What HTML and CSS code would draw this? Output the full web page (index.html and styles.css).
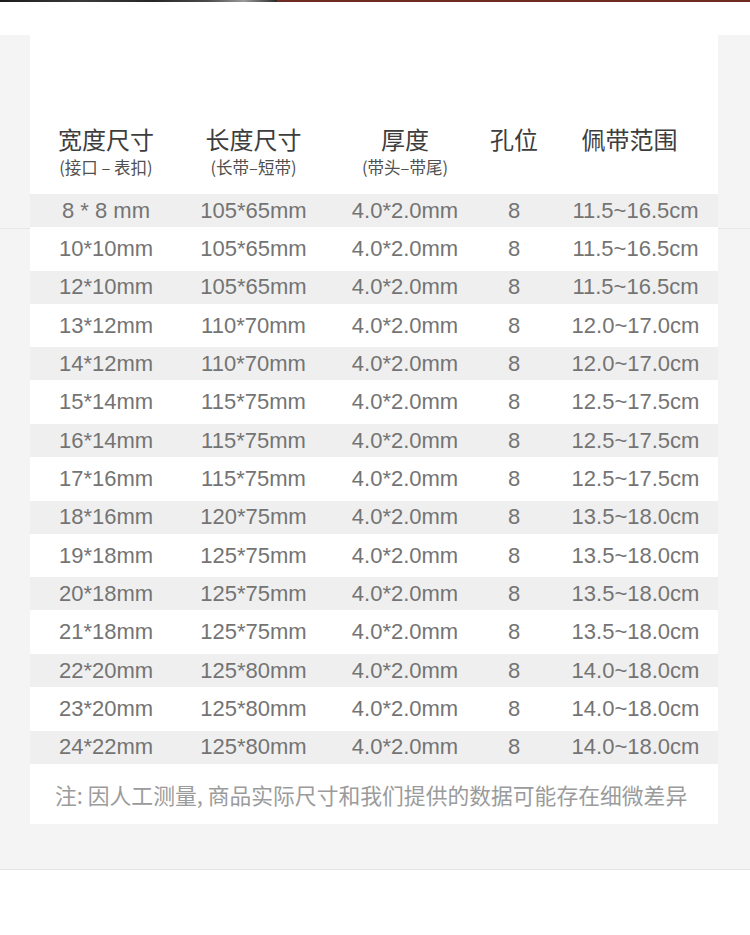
FILE: index.html
```html
<!DOCTYPE html>
<html lang="zh">
<head>
<meta charset="utf-8">
<title>尺寸表</title>
<link rel="stylesheet" href="styles.css">
</head>
<body>
<div class="topbar"><div class="topbar-left"></div><div class="topbar-right"></div></div>
<div class="spacer"></div>
<div class="panel">
  <div class="card">
    <div class="grid head">
      <div class="hcell"><div class="h-main">宽度尺寸</div><div class="h-sub">(接口 – 表扣)</div></div>
      <div class="hcell"><div class="h-main">长度尺寸</div><div class="h-sub">(长带–短带)</div></div>
      <div class="hcell"><div class="h-main">厚度</div><div class="h-sub">(带头–带尾)</div></div>
      <div class="hcell"><div class="h-main">孔位</div></div>
      <div class="hcell h5"><div class="h-main">佩带范围</div></div>
    </div>
    <div class="rows">
      <div class="grid row odd"><span>8 * 8 mm</span><span>105*65mm</span><span>4.0*2.0mm</span><span>8</span><span class="c5">11.5~16.5cm</span></div>
      <div class="grid row"><span>10*10mm</span><span>105*65mm</span><span>4.0*2.0mm</span><span>8</span><span class="c5">11.5~16.5cm</span></div>
      <div class="grid row odd"><span>12*10mm</span><span>105*65mm</span><span>4.0*2.0mm</span><span>8</span><span class="c5">11.5~16.5cm</span></div>
      <div class="grid row"><span>13*12mm</span><span>110*70mm</span><span>4.0*2.0mm</span><span>8</span><span class="c5">12.0~17.0cm</span></div>
      <div class="grid row odd"><span>14*12mm</span><span>110*70mm</span><span>4.0*2.0mm</span><span>8</span><span class="c5">12.0~17.0cm</span></div>
      <div class="grid row"><span>15*14mm</span><span>115*75mm</span><span>4.0*2.0mm</span><span>8</span><span class="c5">12.5~17.5cm</span></div>
      <div class="grid row odd"><span>16*14mm</span><span>115*75mm</span><span>4.0*2.0mm</span><span>8</span><span class="c5">12.5~17.5cm</span></div>
      <div class="grid row"><span>17*16mm</span><span>115*75mm</span><span>4.0*2.0mm</span><span>8</span><span class="c5">12.5~17.5cm</span></div>
      <div class="grid row odd"><span>18*16mm</span><span>120*75mm</span><span>4.0*2.0mm</span><span>8</span><span class="c5">13.5~18.0cm</span></div>
      <div class="grid row"><span>19*18mm</span><span>125*75mm</span><span>4.0*2.0mm</span><span>8</span><span class="c5">13.5~18.0cm</span></div>
      <div class="grid row odd"><span>20*18mm</span><span>125*75mm</span><span>4.0*2.0mm</span><span>8</span><span class="c5">13.5~18.0cm</span></div>
      <div class="grid row"><span>21*18mm</span><span>125*75mm</span><span>4.0*2.0mm</span><span>8</span><span class="c5">13.5~18.0cm</span></div>
      <div class="grid row odd"><span>22*20mm</span><span>125*80mm</span><span>4.0*2.0mm</span><span>8</span><span class="c5">14.0~18.0cm</span></div>
      <div class="grid row"><span>23*20mm</span><span>125*80mm</span><span>4.0*2.0mm</span><span>8</span><span class="c5">14.0~18.0cm</span></div>
      <div class="grid row odd"><span>24*22mm</span><span>125*80mm</span><span>4.0*2.0mm</span><span>8</span><span class="c5">14.0~18.0cm</span></div>
    </div>
    <div class="note">注: 因人工测量, 商品实际尺寸和我们提供的数据可能存在细微差异</div>
  </div>
</div>
<div class="bottom"></div>
</body>
</html>
```

FILE: styles.css
```css
html, body {
  margin: 0;
  padding: 0;
  background: #ffffff;
}
body {
  width: 750px;
  font-family: "Liberation Sans", "Noto Sans CJK SC", sans-serif;
}
.topbar {
  display: flex;
  height: 2px;
}
.topbar-left {
  width: 277px;
  background: linear-gradient(90deg, #1c1c1c 0%, #3a3a3a 30%, #262626 55%, #4a4a4a 75%, #9a9a9a 88%, #2a2a2a 100%);
}
.topbar-right {
  flex: 1;
  background: #6f2b22;
}
.spacer {
  height: 33px;
}
.panel {
  background-color: #f4f4f4;
  background-image: linear-gradient(to bottom, transparent 193px, #e7e7e7 193px, #e7e7e7 194px, transparent 194px);
  padding: 0 32px 45px 30px;
  border-bottom: 1px solid #e3e3e3;
}
.card {
  background: #ffffff;
  height: 789px;
  padding-top: 89px;
  box-sizing: border-box;
}
.grid {
  display: grid;
  grid-template-columns: 152px 143px 160px 58px 175px;
  align-items: center;
  justify-items: center;
}
.head {
  align-items: start;
  height: 70px;
}
.hcell {
  display: flex;
  flex-direction: column;
  align-items: center;
  font-family: "Noto Sans CJK SC", sans-serif;
}
.h-main {
  font-size: 24px;
  line-height: 30px;
  color: #3d3d3d;
}
.h-sub {
  font-size: 16.5px;
  line-height: 20px;
  margin-top: 3px;
  color: #505050;
}
.h5 {
  padding-right: 2px;
}
.c5 {
  padding-left: 10px;
}
.row {
  height: 43.7px;
  font-size: 22px;
  color: #747474;
}
.row.odd {
  height: 33px;
  background: #efefef;
}
.note {
  font-family: "Noto Sans CJK SC", sans-serif;
  font-size: 21.8px;
  line-height: 30px;
  color: #9b9b9b;
  padding: 16px 0 0 25px;
  white-space: nowrap;
}
.bottom {
  height: 65px;
}
```
